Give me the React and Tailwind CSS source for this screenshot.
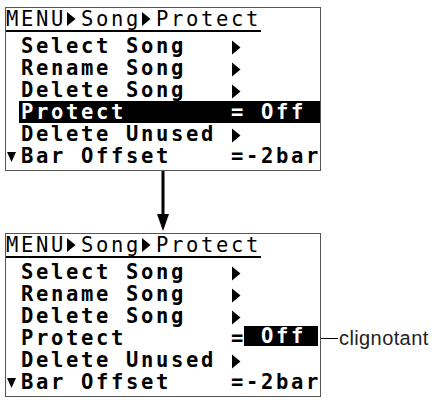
import React from 'react';

const lcd =
  "font-[family-name:'DejaVu_Sans_Mono',monospace] text-[20.5px] tracking-[2.66px] leading-[22px] whitespace-pre";

// triangle pointing right, one LCD cell wide
function Right({ top = 5.5 }) {
  return (
    <svg width="15" height="22" viewBox="0 0 15 22" className="shrink-0">
      <polygon points={`1,${top} 9.5,${top + 7} 1,${top + 14}`} fill="#000" />
    </svg>
  );
}

function Down() {
  return (
    <svg width="15" height="22" viewBox="0 0 15 22" className="shrink-0">
      <polygon points="1,7 10,7 5.5,17" fill="#000" />
    </svg>
  );
}

function Row({ children }) {
  return <div className="flex h-[22px] items-start font-bold">{children}</div>;
}

function Screen({ blink }) {
  return (
    <div className={`w-[316px] h-[164px] border border-[#555] flex flex-col text-black ${lcd}`}>
      {/* titre + soulignement */}
      <div className="flex w-fit h-[24px] border-b-2 border-black">
        <span>MENU</span>
        <Right top={4} />
        <span>Song</span>
        <Right top={4} />
        <span>Protect</span>
      </div>

      <div className="mt-[3px] flex flex-col">
        <Row>
          <span> Select Song   </span>
          <Right />
        </Row>
        <Row>
          <span> Rename Song   </span>
          <Right />
        </Row>
        <Row>
          <span> Delete Song   </span>
          <Right />
        </Row>
        {blink ? (
          <Row>
            <span> Protect       =</span>
            <span className="-ml-[2px] -mt-[1px] w-[74px] h-[20px] leading-[20px] pl-[2px] bg-black text-white"> Off </span>
          </Row>
        ) : (
          <Row>
            <span> </span>
            <span className="flex-1 -ml-[2px] pl-[2px] h-[22px] bg-black text-white">Protect       = Off</span>
          </Row>
        )}
        <Row>
          <span> Delete Unused </span>
          <Right />
        </Row>
        <Row>
          <Down />
          <span>Bar Offset    =-2bar</span>
        </Row>
      </div>
    </div>
  );
}

export default function App() {
  return (
    <div className="w-[432px] h-[401px] bg-white pl-[5px] pt-[7px]">
      <Screen />

      {/* flèche */}
      <div className="w-[316px] h-[62px] flex justify-center">
        <svg width="16" height="62" viewBox="0 0 16 62">
          <rect x="6.5" y="0" width="3" height="44" fill="#000" />
          <polygon points="2,43 14,43 8,60" fill="#000" />
        </svg>
      </div>

      <div className="relative w-fit">
        <Screen blink />
        <div className="absolute left-full top-[94px] h-[22px] flex items-center">
          <div className="w-[17px] h-px bg-black" />
          <span className="font-['Liberation_Sans',Arial,sans-serif] text-[20px] tracking-[0.4px] text-[#222] leading-none ml-px">
            clignotant
          </span>
        </div>
      </div>
    </div>
  );
}
